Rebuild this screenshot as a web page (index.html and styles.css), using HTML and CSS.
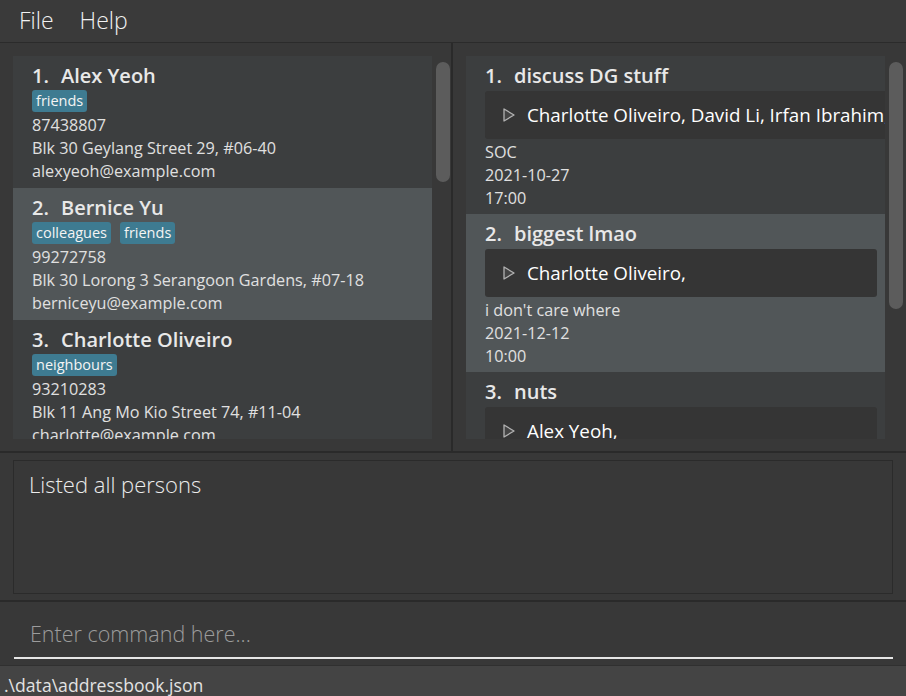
FILE: index.html
```html
<!DOCTYPE html>
<html lang="en">
<head>
<meta charset="utf-8">
<title>Address App</title>
<link rel="stylesheet" href="styles.css">
</head>
<body>
<div class="app">
  <nav class="menubar">
    <span class="menu-item">File</span>
    <span class="menu-item">Help</span>
  </nav>

  <div class="panes">
    <section class="pane pane-left">
      <div class="list">
        <div class="cells">
          <div class="card even">
            <div class="name"><span class="idx">1.</span>Alex Yeoh</div>
            <div class="tags"><span class="tag">friends</span></div>
            <div class="line">87438807</div>
            <div class="line">Blk 30 Geylang Street 29, #06-40</div>
            <div class="line">alexyeoh@example.com</div>
          </div>
          <div class="card odd">
            <div class="name"><span class="idx">2.</span>Bernice Yu</div>
            <div class="tags"><span class="tag">colleagues</span><span class="tag">friends</span></div>
            <div class="line">99272758</div>
            <div class="line">Blk 30 Lorong 3 Serangoon Gardens, #07-18</div>
            <div class="line">berniceyu@example.com</div>
          </div>
          <div class="card even">
            <div class="name"><span class="idx">3.</span>Charlotte Oliveiro</div>
            <div class="tags"><span class="tag">neighbours</span></div>
            <div class="line">93210283</div>
            <div class="line">Blk 11 Ang Mo Kio Street 74, #11-04</div>
            <div class="line">charlotte@example.com</div>
          </div>
        </div>
        <div class="scrollbar"><div class="thumb thumb-left"></div></div>
      </div>
    </section>

    <div class="vdivider"></div>

    <section class="pane pane-right">
      <div class="list">
        <div class="cells">
          <div class="card mcard even">
            <div class="name"><span class="idx">1.</span>discuss DG stuff</div>
            <div class="members">
              <svg class="arrow" viewBox="0 0 12 14" width="12" height="14"><polygon points="1,1 11,7 1,13" fill="#444444" stroke="#b2b2b2" stroke-width="1.3" stroke-linejoin="round"/></svg>
              <span>Charlotte Oliveiro, David Li, Irfan Ibrahim,</span>
            </div>
            <div class="line">SOC</div>
            <div class="line">2021-10-27</div>
            <div class="line">17:00</div>
          </div>
          <div class="card mcard odd">
            <div class="name"><span class="idx">2.</span>biggest lmao</div>
            <div class="members">
              <svg class="arrow" viewBox="0 0 12 14" width="12" height="14"><polygon points="1,1 11,7 1,13" fill="#444444" stroke="#b2b2b2" stroke-width="1.3" stroke-linejoin="round"/></svg>
              <span>Charlotte Oliveiro,</span>
            </div>
            <div class="line">i don't care where</div>
            <div class="line">2021-12-12</div>
            <div class="line">10:00</div>
          </div>
          <div class="card mcard even">
            <div class="name"><span class="idx">3.</span>nuts</div>
            <div class="members">
              <svg class="arrow" viewBox="0 0 12 14" width="12" height="14"><polygon points="1,1 11,7 1,13" fill="#444444" stroke="#b2b2b2" stroke-width="1.3" stroke-linejoin="round"/></svg>
              <span>Alex Yeoh,</span>
            </div>
            <div class="line">SOC</div>
          </div>
        </div>
        <div class="scrollbar"><div class="thumb thumb-right"></div></div>
      </div>
    </section>
  </div>

  <div class="hdivider"></div>

  <section class="result">
    <div class="result-box">Listed all persons</div>
  </section>

  <div class="hdivider"></div>

  <section class="command">
    <div class="cmd-input">Enter command here...</div>
  </section>

  <footer class="status">.\data\addressbook.json</footer>
</div>
</body>
</html>
```

FILE: styles.css
```css
* {
  box-sizing: border-box;
  margin: 0;
  padding: 0;
}

html, body {
  width: 906px;
  height: 696px;
  overflow: hidden;
}

body {
  background: #383838;
  font-family: "Open Sans", "Noto Sans", sans-serif;
  color: #e4e4e4;
}

.app {
  display: flex;
  flex-direction: column;
  height: 696px;
}

.menubar {
  height: 43px;
  flex: none;
  background: #3a3a3a;
  border-bottom: 1px solid #2b2b2b;
  display: flex;
  align-items: center;
  gap: 26px;
  padding-left: 19px;
  padding-bottom: 2px;
  font-size: 23px;
  font-weight: 300;
  color: #f2f2f2;
}

.panes {
  display: flex;
  height: 408px;
  flex: none;
}

.pane {
  display: flex;
  padding: 13px 0 12px 13px;
}

.pane-left {
  flex: none;
  width: 451px;
  padding-right: 1px;
}

.pane-right {
  flex: 1;
  min-width: 0;
  padding-right: 3px;
}

.vdivider {
  flex: none;
  width: 2px;
  background: #2a2a2a;
}

.list {
  flex: 1;
  display: flex;
  gap: 4px;
  min-width: 0;
}

.cells {
  flex: 1;
  min-width: 0;
  overflow: hidden;
}

.scrollbar {
  flex: none;
  width: 14px;
  padding-top: 6px;
}

.thumb {
  background: #5c5c5c;
  border-radius: 7px;
}

.thumb-left { height: 120px; }
.thumb-right { height: 247px; }

.card {
  padding: 7px 0 5px 19px;
  overflow: hidden;
}

.even { background: #3c3e3f; }
.odd { background: #515658; }

.name {
  font-size: 20px;
  font-weight: 600;
  line-height: 26px;
  color: #e8e8e8;
  white-space: nowrap;
}

.idx {
  display: inline-block;
  width: 29px;
}

.tags {
  display: flex;
  gap: 9px;
  margin: 1px 0 2px;
  height: 22px;
}

.tag {
  background: #3e7b91;
  color: #f4f4f4;
  border-radius: 3px;
  padding: 0 4px;
  font-size: 14.5px;
  line-height: 22px;
}

.line {
  font-size: 16.2px;
  line-height: 23px;
  color: #e0e0e0;
  white-space: nowrap;
}

.mcard {
  padding: 7px 8px 4px 19px;
}

.members {
  display: flex;
  align-items: center;
  width: max-content;
  min-width: 100%;
  height: 48px;
  margin: 2px 0 2px;
  padding-left: 18px;
  padding-right: 8px;
  background: #353535;
  border-radius: 3px;
  font-size: 18.8px;
  color: #ffffff;
  white-space: nowrap;
}

.arrow {
  flex: none;
  margin-right: 12px;
}

.hdivider {
  height: 2px;
  flex: none;
  background: #2a2a2a;
}

.result {
  height: 147px;
  flex: none;
  padding: 7px 13px 6px 13px;
}

.result-box {
  height: 100%;
  border: 1px solid #2b2b2b;
  background: #383838;
  padding: 8px 15px;
  font-size: 22px;
  font-weight: 300;
  line-height: 30px;
  color: #ececec;
}

.command {
  height: 63px;
  flex: none;
  padding: 17px 13px 0 14px;
}

.cmd-input {
  padding: 0 0 8px 16px;
  border-bottom: 2px solid #e6e6e6;
  font-size: 21.5px;
  font-weight: 300;
  line-height: 30px;
  color: #9c9c9c;
}

.status {
  height: 31px;
  flex: none;
  background: #444444;
  border-top: 1px solid #303030;
  padding: 7px 0 0 4px;
  font-size: 17.6px;
  line-height: 24px;
  color: #e2e2e2;
  white-space: nowrap;
}
```
